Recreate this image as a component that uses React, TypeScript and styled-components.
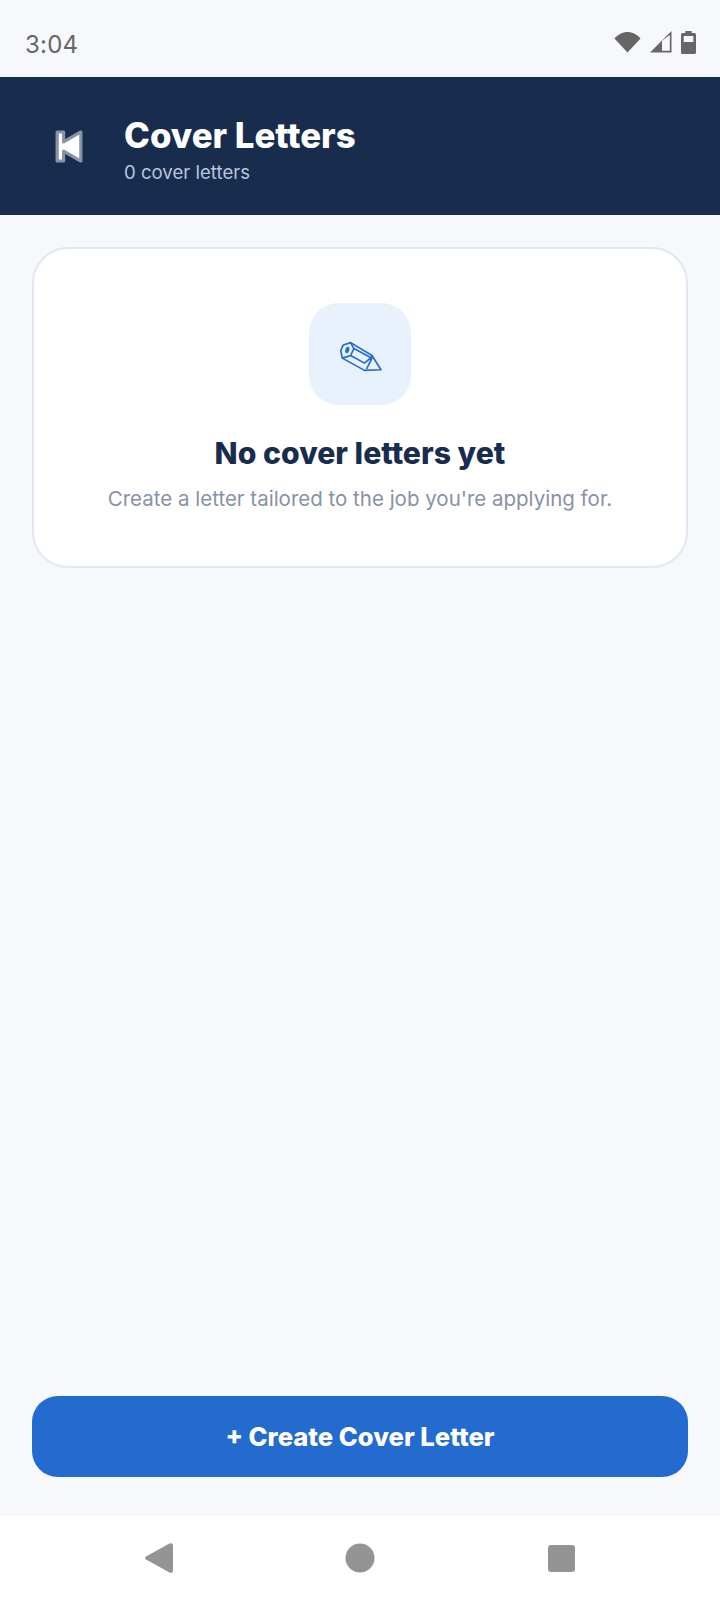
import React from 'react';
import styled, { createGlobalStyle } from 'styled-components';

const GlobalStyle = createGlobalStyle`
  html, body {
    margin: 0;
    padding: 0;
    background: #f7f8fc;
  }
  * {
    box-sizing: border-box;
  }
`;

const Screen = styled.div`
  width: 720px;
  height: 1600px;
  display: flex;
  flex-direction: column;
  background: #f7f8fc;
  font-family: Inter, 'Liberation Sans', sans-serif;
`;

const StatusBar = styled.div`
  height: 77px;
  flex-shrink: 0;
  display: flex;
  align-items: center;
  justify-content: space-between;
  padding: 11px 24px 0 25px;
`;

const Clock = styled.span`
  font-size: 24px;
  color: #666666;
  letter-spacing: 0.2px;
`;

const StatusIcons = styled.div`
  display: flex;
  align-items: center;
  gap: 9px;
  margin-bottom: 4px;
`;

const Header = styled.header`
  height: 138px;
  flex-shrink: 0;
  display: flex;
  align-items: center;
  background: #182c4e;
  padding: 6px 0 0 55px;
  gap: 41px;
`;

const BackIcon = styled.svg`
  width: 28px;
  height: 33px;
  margin-top: -6px;
`;

const HeaderText = styled.div`
  display: flex;
  flex-direction: column;
  gap: 5px;
  margin-top: 1px;
`;

const Title = styled.h1`
  margin: 0;
  font-size: 34.800px;
  line-height: 40px;
  font-weight: 800;
  color: #ffffff;
`;

const Subtitle = styled.p`
  margin: 0;
  font-size: 18.600px;
  line-height: 24px;
  color: #b9c6de;
`;

const Main = styled.main`
  flex: 1;
  display: flex;
  flex-direction: column;
  justify-content: space-between;
  padding: 32px 32px 39px;
`;

const EmptyCard = styled.section`
  height: 321px;
  display: flex;
  flex-direction: column;
  align-items: center;
  padding-top: 54px;
  background: #ffffff;
  border: 2px solid #e2e8f2;
  border-radius: 36px;
`;

const IconTile = styled.div`
  width: 102px;
  height: 102px;
  display: flex;
  align-items: center;
  justify-content: center;
  background: #e9f1fc;
  border-radius: 30px;
`;

const PencilIcon = styled.svg`
  width: 47px;
  height: 33px;
  margin-top: 5px;
  fill: none;
  stroke: #236bce;
  stroke-width: 5;
  stroke-linejoin: round;
`;

const EmptyTitle = styled.h2`
  margin: 29px 0 0;
  font-size: 30.200px;
  line-height: 38px;
  font-weight: 800;
  color: #182c4e;
`;

const EmptyText = styled.p`
  margin: 13px 0 0;
  font-size: 20.500px;
  line-height: 28px;
  color: #8792a6;
`;

const CreateButton = styled.button`
  height: 81px;
  border: 0;
  border-radius: 26px;
  background: #236bce;
  color: #ffffff;
  font-family: inherit;
  font-size: 25.600px;
  font-weight: 800;
`;

const NavBar = styled.nav`
  height: 84px;
  flex-shrink: 0;
  display: flex;
  align-items: center;
  justify-content: center;
  gap: 140px;
  background: #ffffff;
`;

const NavIcon = styled.svg`
  width: 60px;
  height: 60px;
  fill: #949494;
`;

export default function App() {
  return (
    <Screen>
      <GlobalStyle />
      <StatusBar>
        <Clock>3:04</Clock>
        <StatusIcons>
          <svg width="27" height="22" viewBox="0 0 28 22" preserveAspectRatio="none">
            <path d="M0.500 7.500C4 3.500 9 1 14 1s10 2.500 13.500 6.500L14 21.500z" fill="#666" />
          </svg>
          <svg width="22" height="22" viewBox="0 0 22 22">
            <path d="M0 21.500 21.500 0v21.500z" fill="#666" />
            <path d="M12 19.800V9.800l7.800-5.800v15.800z" fill="#f7f8fc" />
          </svg>
          <svg width="15" height="23" viewBox="0 0 14 23" preserveAspectRatio="none">
            <path d="M4 0h6v2h2.500A1.500 1.500 0 0 1 14 3.500V21.500A1.500 1.500 0 0 1 12.500 23h-11A1.500 1.500 0 0 1 0 21.500V3.500A1.500 1.500 0 0 1 1.500 2H4z" fill="#666" />
            <rect x="2.500" y="5" width="9" height="6" fill="#f7f8fc" />
          </svg>
        </StatusIcons>
      </StatusBar>
      <Header>
        <BackIcon viewBox="0 0 26 32" preserveAspectRatio="none">
          <path d="M2 2h6v9.500L23.500 2H24v28h-.5L8 20.500V30H2z" fill="#ffffff" stroke="#8693a8" strokeWidth="3" strokeLinejoin="round" />
        </BackIcon>
        <HeaderText>
          <Title>Cover Letters</Title>
          <Subtitle>0 cover letters</Subtitle>
        </HeaderText>
      </Header>
      <Main>
        <EmptyCard>
          <IconTile>
            <PencilIcon viewBox="140 150 140 100">
              <path d="M150 182 158 165 180 158 245 197 272 240 222 242 155 205z" />
              <path d="M180 158 190 176 180 197 155 205M180 197 222 220 240 205M190 176 245 205 228 238M245 197 240 212" />
              <ellipse cx="170" cy="180" rx="6" ry="10" fill="#236bce" stroke="none" transform="rotate(15 170 180)" />
            </PencilIcon>
          </IconTile>
          <EmptyTitle>No cover letters yet</EmptyTitle>
          <EmptyText>Create a letter tailored to the job you're applying for.</EmptyText>
        </EmptyCard>
        <CreateButton>+ Create Cover Letter</CreateButton>
      </Main>
      <NavBar>
        <NavIcon viewBox="0 0 60 60">
          <path d="M16 28.500 39.500 15.500c1.500-.8 3.500 0 3.500 2v25c0 2-2 2.800-3.500 2L16 31.500c-1.300-.8-1.300-2.200 0-3z" />
        </NavIcon>
        <NavIcon viewBox="0 0 60 60">
          <circle cx="30" cy="30" r="14.500" />
        </NavIcon>
        <NavIcon viewBox="0 0 60 60">
          <rect x="18" y="17" width="27" height="27" rx="3" />
        </NavIcon>
      </NavBar>
    </Screen>
  );
}
